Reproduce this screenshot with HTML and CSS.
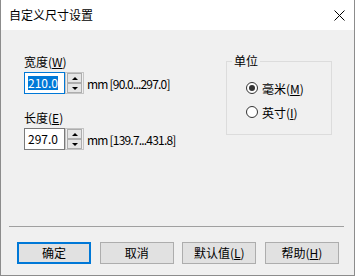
FILE: index.html
```html
<!DOCTYPE html>
<html lang="zh-CN">
<head>
    <meta charset="UTF-8">
    <title>自定义尺寸设置</title>
    <link rel="stylesheet" href="styles.css">
</head>
<body>
    <div class="window">
        <div class="titlebar">
            <span class="title">自定义尺寸设置</span>
            <svg class="close" width="11" height="11" viewBox="0 0 11 11">
                <path d="M0.5 0.5 L10.5 10.5 M10.5 0.5 L0.5 10.5" stroke="#000" stroke-width="1" fill="none"/>
            </svg>
        </div>
        <div class="client">
            <div class="main">
                <div class="fields">
                    <div class="field">
                        <div class="label">宽度(<u>W</u>)</div>
                        <div class="spin-row">
                            <div class="textbox focused"><span class="sel">210.0</span></div>
                            <div class="spinner">
                                <span class="spin-btn"><span class="arrow-up"></span></span>
                                <span class="spin-btn"><span class="arrow-down"></span></span>
                            </div>
                            <span class="range">mm [90.0...297.0]</span>
                        </div>
                    </div>
                    <div class="field second">
                        <div class="label">长度(<u>E</u>)</div>
                        <div class="spin-row">
                            <div class="textbox"><span>297.0</span></div>
                            <div class="spinner">
                                <span class="spin-btn"><span class="arrow-up"></span></span>
                                <span class="spin-btn"><span class="arrow-down"></span></span>
                            </div>
                            <span class="range">mm [139.7...431.8]</span>
                        </div>
                    </div>
                </div>
                <fieldset class="unit-group">
                    <legend>单位</legend>
                    <div class="radio first"><span class="radio-dot checked"></span>毫米(<u>M</u>)</div>
                    <div class="radio"><span class="radio-dot"></span>英寸(<u>I</u>)</div>
                </fieldset>
            </div>
            <div class="separator"></div>
            <div class="buttons">
                <button class="btn default">确定</button>
                <button class="btn">取消</button>
                <button class="btn">默认值(<u>L</u>)</button>
                <button class="btn">帮助(<u>H</u>)</button>
            </div>
        </div>
    </div>
</body>
</html>
```

FILE: styles.css
```css
body {
    margin: 0;
    background: #fff;
}
.window {
    width: 355px;
    height: 276px;
    box-sizing: border-box;
    border: 1px solid #8c8c8c;
    border-top: none;
    display: flex;
    flex-direction: column;
    font-family: "Noto Sans CJK SC", sans-serif;
    font-size: 12px;
    color: #000;
}
.titlebar {
    height: 30px;
    flex-shrink: 0;
    display: flex;
    align-items: center;
    justify-content: space-between;
    padding: 0 9px 0 8px;
    background: #fff;
}
.title {
    line-height: 16px;
}
.close {
    display: block;
}
.client {
    flex: 1;
    background: #f0f0f0;
    display: flex;
    flex-direction: column;
}
.main {
    flex: 1;
    display: flex;
    align-items: flex-start;
    padding: 24px 22px 0 23px;
}
.fields {
    flex: 1;
}
.label {
    height: 16px;
    line-height: 16px;
    margin-bottom: 2px;
}
.field.second {
    margin-top: 16px;
}
.spin-row {
    display: flex;
    align-items: center;
    height: 22px;
}
.textbox {
    width: 41px;
    height: 22px;
    box-sizing: border-box;
    border: 1px solid #7a7a7a;
    background: #fff;
    padding-left: 3px;
    display: flex;
    align-items: center;
    line-height: 14px;
}
.textbox.focused {
    border-color: #0078d7;
}
.sel {
    background: #0078d7;
    color: #fff;
}
.spinner {
    width: 19px;
    height: 22px;
    box-sizing: border-box;
    border: 1px solid #c4c4c4;
    padding: 0 1px;
    display: flex;
    flex-direction: column;
}
.spin-btn {
    height: 10px;
    box-sizing: border-box;
    border: 1px solid #adadad;
    background: #e5e5e5;
    display: flex;
    align-items: center;
    justify-content: center;
}
.arrow-up {
    width: 0;
    height: 0;
    border-left: 3px solid transparent;
    border-right: 3px solid transparent;
    border-bottom: 3px solid #000;
}
.arrow-down {
    width: 0;
    height: 0;
    border-left: 3px solid transparent;
    border-right: 3px solid transparent;
    border-top: 3px solid #000;
}
.range {
    margin-left: 3px;
    letter-spacing: -0.8px;
}
.unit-group {
    width: 106px;
    height: 82px;
    box-sizing: border-box;
    margin: -1px 0 0 0;
    padding: 0 0 0 5px;
    border: 1px solid #dcdcdc;
    min-width: 0;
}
.unit-group legend {
    padding: 0 2px;
    line-height: 16px;
}
.radio {
    display: flex;
    align-items: center;
    height: 16px;
    margin: 8px 0 0 14px;
}
.radio.first {
    margin-top: 11px;
}
.radio-dot {
    width: 12px;
    height: 12px;
    box-sizing: border-box;
    border: 1px solid #333;
    border-radius: 50%;
    background: #fff;
    margin-right: 4px;
    display: flex;
    align-items: center;
    justify-content: center;
}
.radio-dot.checked::after {
    content: "";
    width: 6px;
    height: 6px;
    border-radius: 50%;
    background: #333;
}
.separator {
    height: 1px;
    background: #a0a0a0;
    margin: 0 10px 0 8px;
}
.buttons {
    display: flex;
    justify-content: space-between;
    padding: 15px 15px 11px 16px;
}
.btn {
    width: 74px;
    height: 22px;
    box-sizing: border-box;
    border: 1px solid #adadad;
    background: #e1e1e1;
    font: inherit;
    color: #000;
    padding: 0;
    line-height: 16px;
}
.btn.default {
    border: 2px solid #0078d7;
}
```
